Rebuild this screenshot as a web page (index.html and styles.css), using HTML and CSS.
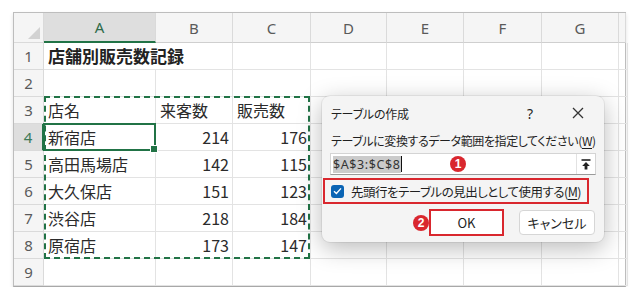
FILE: index.html
```html
<!DOCTYPE html>
<html lang="ja">
<head>
  <meta charset="UTF-8" />
  <meta name="viewport" content="width=device-width, initial-scale=1.0" />
  <title>テーブルの作成</title>
  <link rel="stylesheet" href="styles.css">
</head>
<body>
  <div class="wrap">
    <!-- ワークシート -->
    <div class="sheet">
      <div class="hd corner">
        <svg width="12" height="12" viewBox="0 0 12 12"><polygon points="12,0 12,12 0,12" fill="#d2d2d2"/></svg>
      </div>
      <div class="hd col active">A</div>
      <div class="hd col">B</div>
      <div class="hd col">C</div>
      <div class="hd col">D</div>
      <div class="hd col">E</div>
      <div class="hd col">F</div>
      <div class="hd col">G</div>
      <div class="hd col"></div>

      <div class="hd row">1</div>
      <div class="cell title span2">店舗別販売数記録</div>
      <div class="cell"></div><div class="cell"></div><div class="cell"></div><div class="cell"></div><div class="cell"></div><div class="cell"></div>

      <div class="hd row">2</div>
      <div class="cell"></div><div class="cell"></div><div class="cell"></div><div class="cell"></div><div class="cell"></div><div class="cell"></div><div class="cell"></div><div class="cell"></div>

      <div class="hd row">3</div>
      <div class="cell">店名</div><div class="cell">来客数</div><div class="cell">販売数</div>
      <div class="cell"></div><div class="cell"></div><div class="cell"></div><div class="cell"></div><div class="cell"></div>

      <div class="hd row active">4</div>
      <div class="cell">新宿店</div><div class="cell num">214</div><div class="cell num">176</div>
      <div class="cell"></div><div class="cell"></div><div class="cell"></div><div class="cell"></div><div class="cell"></div>

      <div class="hd row">5</div>
      <div class="cell">高田馬場店</div><div class="cell num">142</div><div class="cell num">115</div>
      <div class="cell"></div><div class="cell"></div><div class="cell"></div><div class="cell"></div><div class="cell"></div>

      <div class="hd row">6</div>
      <div class="cell">大久保店</div><div class="cell num">151</div><div class="cell num">123</div>
      <div class="cell"></div><div class="cell"></div><div class="cell"></div><div class="cell"></div><div class="cell"></div>

      <div class="hd row">7</div>
      <div class="cell">渋谷店</div><div class="cell num">218</div><div class="cell num">184</div>
      <div class="cell"></div><div class="cell"></div><div class="cell"></div><div class="cell"></div><div class="cell"></div>

      <div class="hd row">8</div>
      <div class="cell">原宿店</div><div class="cell num">173</div><div class="cell num">147</div>
      <div class="cell"></div><div class="cell"></div><div class="cell"></div><div class="cell"></div><div class="cell"></div>

      <div class="hd row">9</div>
      <div class="cell"></div><div class="cell"></div><div class="cell"></div><div class="cell"></div><div class="cell"></div><div class="cell"></div><div class="cell"></div><div class="cell"></div>
    </div>

    <!-- 選択範囲とアクティブセル -->
    <div class="marquee"></div>
    <div class="active-cell"><span class="handle"></span></div>

    <!-- テーブルの作成ダイアログ -->
    <div class="dialog">
      <div class="dlg-title">
        <span class="dlg-name">テーブルの作成</span>
        <span class="dlg-icon help">?</span>
        <span class="dlg-icon close">
          <svg width="12" height="12" viewBox="0 0 12 12"><path d="M1 1 L11 11 M11 1 L1 11" stroke="#333" stroke-width="1.3" fill="none"/></svg>
        </span>
      </div>
      <div class="dlg-body">
        <div class="dlg-label">テーブルに変換するデータ範囲を指定してください(<u>W</u>)</div>
        <div class="range-box">
          <span class="range-text"><span class="sel">$A$3:$C$8</span><span class="caret"></span></span>
          <span class="badge badge-1">1</span>
          <span class="collapse-btn">
            <svg width="10" height="11" viewBox="0 0 10 11"><path d="M0.5 1 H9.5" stroke="#222" stroke-width="1.6"/><path d="M5 3 L1.2 7 H3.6 V10.5 H6.4 V7 H8.8 Z" fill="#222"/></svg>
          </span>
        </div>
        <div class="check-row">
          <span class="checkbox">
            <svg width="9" height="8" viewBox="0 0 9 8"><path d="M1 4.2 L3.4 6.4 L8 1.4" stroke="#fff" stroke-width="1.4" fill="none"/></svg>
          </span>
          <span class="check-label">先頭行をテーブルの見出しとして使用する(<u>M</u>)</span>
        </div>
        <div class="btn-row">
          <span class="badge">2</span>
          <button class="btn ok">OK</button>
          <button class="btn cancel">キャンセル</button>
        </div>
      </div>
    </div>
  </div>
</body>
</html>
```

FILE: styles.css
```css
body {
  margin: 0;
  padding: 12px 0 0 13px;
  background: #fff;
  font-family: "Noto Sans CJK JP", "Noto Sans", sans-serif;
  color: #333;
}

.wrap {
  position: relative;
  width: 613px;
}

.sheet {
  display: grid;
  grid-template-columns: 30px 112px 77px 78px 76px 77px 78px 77px 7px;
  grid-template-rows: 30px repeat(9, 27px);
  border: 1px solid #bdbdbd;
  border-bottom-color: #a8a8a8;
  background: #fff;
  box-shadow: 0 2px 4px rgba(0, 0, 0, 0.12);
}

.sheet > div {
  box-sizing: border-box;
  border-right: 1px solid #e3e3e3;
  border-bottom: 1px solid #e3e3e3;
}

.hd {
  background: #f5f5f5;
  color: #5a5a5a;
  font-family: "Noto Sans", sans-serif;
  font-size: 15px;
  display: flex;
  align-items: center;
  justify-content: center;
}

.sheet > .hd {
  border-color: #dadada;
}

.hd.col {
  border-bottom: 1px solid #cfcfcf;
}

.hd.col.active {
  background: #dedede;
  color: #2f6b4b;
  border-bottom: 2px solid #217346;
}

.hd.row.active {
  background: #dedede;
  color: #3d7a58;
  border-right: 2px solid #217346;
}

.corner {
  align-items: flex-end;
  justify-content: flex-end;
  padding: 0 3px 3px 0;
}

.corner svg {
  display: block;
}

.cell {
  font-size: 16px;
  line-height: 26px;
  padding: 0 4px;
  white-space: nowrap;
  color: #2b2b2b;
}

.cell.title {
  font-weight: bold;
  font-size: 17px;
  color: #222;
}

.span2 {
  grid-column: span 2;
}

.cell.num {
  text-align: right;
  padding-right: 3px;
}

.marquee {
  position: absolute;
  left: 31px;
  top: 84px;
  width: 266px;
  height: 163px;
  border: 2px dashed #217346;
  box-sizing: border-box;
}

.active-cell {
  position: absolute;
  left: 30px;
  top: 111px;
  width: 113px;
  height: 28px;
  border: 2px solid #217346;
  box-sizing: border-box;
}

.handle {
  position: absolute;
  right: -4px;
  bottom: -4px;
  width: 6px;
  height: 6px;
  background: #217346;
  border: 1px solid #fff;
}

/* ダイアログ */
.dialog {
  position: absolute;
  left: 309px;
  top: 84px;
  width: 282px;
  height: 146px;
  background: #f4f4f4;
  border-radius: 8px;
  box-shadow: 0 6px 24px rgba(0, 0, 0, 0.28), 0 0 0 1px rgba(0, 0, 0, 0.06);
  font-feature-settings: "palt";
  color: #1f1f1f;
}

.dlg-title {
  display: flex;
  align-items: center;
  height: 34px;
  padding-left: 9px;
}

.dlg-name {
  font-size: 12px;
  letter-spacing: -0.2px;
  flex: 1;
}

.dlg-icon {
  width: 48px;
  text-align: center;
  font-family: "Noto Sans", sans-serif;
  font-size: 14px;
}

.close {
  margin-right: 2px;
  display: flex;
  justify-content: center;
}

.dlg-body {
  padding: 2px 8px 0 8px;
}

.dlg-label {
  font-size: 12px;
  letter-spacing: -0.4px;
  line-height: 17px;
  padding-left: 1px;
  white-space: nowrap;
}

.dlg-label u,
.check-label u {
  text-underline-offset: 2px;
}

.range-box {
  position: relative;
  display: flex;
  align-items: center;
  height: 22px;
  margin-top: 4px;
  background: #fff;
  border: 1px solid #d4d4d4;
  border-bottom-color: #9a9a9a;
  box-sizing: border-box;
}

.range-text {
  flex: 1;
  display: flex;
  align-items: center;
  padding-left: 2px;
  font-family: "Noto Sans", sans-serif;
  font-size: 12.5px;
  letter-spacing: 0.6px;
  color: #333;
}

.sel {
  background: #cbcbcb;
  line-height: 17px;
}

.caret {
  width: 1px;
  height: 16px;
  background: #111;
}

.collapse-btn {
  width: 18px;
  height: 20px;
  display: flex;
  align-items: center;
  justify-content: center;
  border-left: 1px solid #e2e2e2;
}

.badge {
  width: 16px;
  height: 16px;
  border-radius: 50%;
  background: #d9272e;
  color: #fff;
  font-family: "Liberation Sans", sans-serif;
  font-weight: bold;
  font-size: 12px;
  line-height: 16px;
  text-align: center;
  flex: none;
}

.badge-1 {
  position: absolute;
  left: 119px;
  top: 2px;
}

.check-row {
  display: flex;
  align-items: center;
  gap: 7px;
  height: 26px;
  width: 266px;
  margin: 3px 0 0 -7px;
  padding-left: 6px;
  border: 2px solid #d9272e;
  box-sizing: border-box;
  white-space: nowrap;
}

.check-label {
  font-size: 12.5px;
  letter-spacing: -0.5px;
}

.checkbox {
  width: 13px;
  height: 13px;
  border-radius: 3px;
  background: #0a64b4;
  display: flex;
  align-items: center;
  justify-content: center;
  flex: none;
}

.btn-row {
  display: flex;
  justify-content: flex-end;
  align-items: center;
  margin-top: 5px;
  padding-right: 1px;
}

.btn {
  height: 27px;
  font-family: "Noto Sans CJK JP", "Noto Sans", sans-serif;
  font-feature-settings: "palt";
  font-size: 13px;
  color: #1f1f1f;
  background: #fff;
  box-sizing: border-box;
  padding: 0;
}

.btn.ok {
  width: 75px;
  border: 2px solid #d9272e;
}

.btn.cancel {
  width: 76px;
  height: 25px;
  margin-left: 15px;
  border: 1px solid #d6d6d6;
  border-radius: 4px;
}
```
